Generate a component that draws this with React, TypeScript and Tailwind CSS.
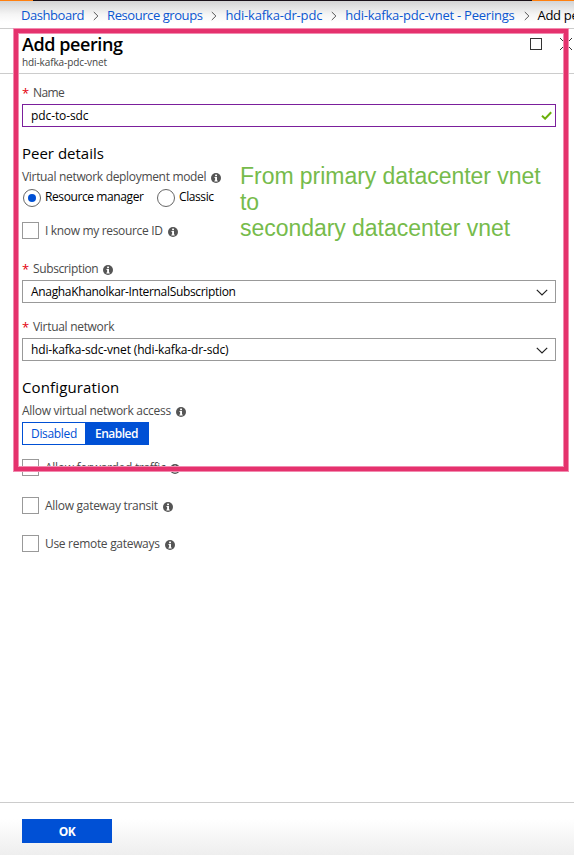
import React from "react";

function Info() {
  return (
    <svg className="mt-[2px] h-[10px] w-[10px] shrink-0" viewBox="0 0 10 10">
      <circle cx="5" cy="5" r="5" fill="#555" />
      <rect x="4.1" y="1.6" width="1.9" height="1.6" fill="#fff" />
      <path d="M3.5 4.1H6v3.4h.7v.9H3.4v-.9h.7V5h-.6z" fill="#fff" />
    </svg>
  );
}

function Chevron() {
  return (
    <svg className="mr-[8px] ml-[9px] h-[10px] w-[6px] shrink-0" viewBox="0 0 6 10">
      <path d="M.8 1 4.9 5 .8 9" fill="none" stroke="#555" strokeWidth="1" />
    </svg>
  );
}

function Label({ text, track, required, info }: { text: string; track: string; required?: boolean; info?: boolean }) {
  return (
    <div className="flex h-[18px] items-center text-[12px] text-[#4a4a4a]">
      {required && <span className="w-[11px] text-[13px] leading-none text-[#e3000b]">*</span>}
      <span className={track}>{text}</span>
      {info && <span className="ml-[5px] flex"><Info /></span>}
    </div>
  );
}

function Select({ text, track }: { text: string; track: string }) {
  return (
    <div className="flex h-[23px] w-[534px] items-center justify-between border border-[#999] bg-white pr-[7px] pl-[8px] text-[12px] text-black">
      <span className={track}>{text}</span>
      <svg className="h-[8px] w-[12px]" viewBox="0 0 12 8">
        <path d="M.8 1.8 6 7l5.200-5.200" fill="none" stroke="#222" strokeWidth="1.2" />
      </svg>
    </div>
  );
}

function Check({ text, track }: { text: string; track: string }) {
  return (
    <div className="flex h-[17px] items-center text-[12px] text-[#4a4a4a]">
      <span className="mr-[6px] h-[17px] w-[17px] border border-[#999] bg-white" />
      <span className={track}>{text}</span>
      <span className="ml-[5px] flex"><Info /></span>
    </div>
  );
}

export default function App() {
  return (
    <div className="relative flex h-[855px] w-[574px] flex-col overflow-hidden bg-white font-['Open_Sans','Noto_Sans',sans-serif] whitespace-nowrap">
      <div className="flex h-px shrink-0 bg-[#1a1118]">
        <div className="w-[33px] bg-[#ff7f0e]" />
        <div className="ml-[499px] w-[42px] bg-[#ff7f0e]" />
      </div>
      <nav className="flex h-[28px] shrink-0 items-center border-b border-[#ccc] bg-linear-to-b from-[#d4d4d4] via-[#f5f5f5] via-50% to-white to-80% pt-[2px] pl-[21px] text-[13px] text-[#0b56d0]">
        <span className="tracking-[-0.45px]">Dashboard</span>
        <Chevron />
        <span className="tracking-[-0.43px]">Resource groups</span>
        <Chevron />
        <span className="tracking-[-0.18px]">hdi-kafka-dr-pdc</span>
        <Chevron />
        <span className="tracking-[-0.23px]">hdi-kafka-pdc-vnet - Peerings</span>
        <Chevron />
        <span className="tracking-[-0.3px] text-black">Add peering</span>
      </nav>

      <header className="flex h-[45px] shrink-0 justify-between border-b border-[#ccc] pl-[22px]">
        <div>
          <h1 className="mt-[3px] h-[24px] text-[18px] leading-[24px] font-semibold tracking-[-0.42px] text-black">Add peering</h1>
          <p className="h-[12px] text-[10px] leading-[12px] tracking-[-0.1px] text-[#444]">hdi-kafka-pdc-vnet</p>
        </div>
        <div className="mt-[9px] mr-[2px] flex gap-[18px]">
          <span className="h-[12px] w-[12px] border border-[#333]" />
          <svg className="h-[12px] w-[12px]" viewBox="0 0 12 12">
            <path d="M0 0 12 12M12 0 0 12" stroke="#333" strokeWidth="1" />
          </svg>
        </div>
      </header>

      <main className="flex flex-col pl-[22px]">
        <div className="mt-[10px]"><Label text="Name" track="tracking-[-0.6px]" required /></div>
        <div className="mt-[2px] flex h-[23px] w-[534px] items-center justify-between border border-[#7b1f9c] pr-[3px] pl-[8px] text-[12px]">
          <span className="tracking-[-0.1px]">pdc-to-sdc</span>
          <svg className="h-[9px] w-[11px]" viewBox="0 0 11 9">
            <path d="M1 4.800 4.100 7.700 10.200 1.200" fill="none" stroke="#6bb00b" strokeWidth="2" />
          </svg>
        </div>
        <h2 className="mt-[15px] h-[22px] text-[15px] leading-[22px]">Peer details</h2>
        <div className="mt-[4px]"><Label text="Virtual network deployment model" track="tracking-[-0.32px]" info /></div>
        <div className="mt-[3px] flex h-[18px] items-center text-[12px]">
          <span className="ml-px flex h-[18px] w-[18px] items-center justify-center rounded-full border border-[#666]">
            <span className="h-[8px] w-[8px] rounded-full bg-[#0050d5]" />
          </span>
          <span className="mt-[-2px] ml-[4px] w-[112px] tracking-[-0.4px]">Resource manager</span>
          <span className="h-[18px] w-[18px] rounded-full border border-[#666]" />
          <span className="mt-[-2px] ml-[4px] tracking-[-0.4px]">Classic</span>
        </div>
        <div className="mt-[15px]"><Check text="I know my resource ID" track="tracking-[-0.33px]" /></div>
        <div className="mt-[21px]"><Label text="Subscription" track="tracking-[-0.38px]" required info /></div>
        <div className="mt-[2px]"><Select text="AnaghaKhanolkar-InternalSubscription" track="tracking-[-0.33px]" /></div>
        <div className="mt-[15px]"><Label text="Virtual network" track="tracking-[-0.3px]" required /></div>
        <div className="mt-[2px]"><Select text="hdi-kafka-sdc-vnet (hdi-kafka-dr-sdc)" track="tracking-[-0.15px]" /></div>
        <h2 className="mt-[15px] h-[22px] text-[15px] leading-[22px] tracking-[0.13px]">Configuration</h2>
        <div className="mt-[4px]"><Label text="Allow virtual network access" track="tracking-[-0.3px]" info /></div>
        <div className="mt-[2px] flex h-[23px] w-[127px] border border-[#0050d5] text-[12px] leading-[21px]">
          <span className="w-[62px] text-center tracking-[-0.33px] text-[#0050d5]">Disabled</span>
          <span className="flex-1 bg-[#0050d5] text-center font-semibold tracking-[-0.5px] text-white">Enabled</span>
        </div>
        <div className="mt-[14px] flex flex-col gap-[21px]">
          <Check text="Allow forwarded traffic" track="tracking-[-0.31px]" />
          <Check text="Allow gateway transit" track="tracking-[-0.29px]" />
          <Check text="Use remote gateways" track="tracking-[-0.3px]" />
        </div>
      </main>

      <footer className="mt-auto h-[53px] shrink-0 border-t border-[#ccc] bg-linear-to-b from-white from-30% to-[#eeeeee] pt-[16px] pl-[22px]">
        <button className="block h-[24px] w-[90px] bg-[#0050d5] pt-px text-[12px] leading-[23px] font-bold tracking-[-0.5px] text-white">OK</button>
      </footer>

      <div className="absolute top-[28px] left-[13px] h-[444px] w-[556px] border border-[#f28bb0]">
        <div className="h-full w-full border-4 border-[#e5326d]">
          <div className="h-full w-full border border-[#f28bb0]" />
        </div>
      </div>
      <p className="absolute top-[163px] left-[240px] font-['Liberation_Sans',Arial,sans-serif] text-[23px] leading-[26px] tracking-[-0.04px] text-[#76bb4b]">
        From primary datacenter vnet<br />to<br />secondary datacenter vnet
      </p>
    </div>
  );
}
